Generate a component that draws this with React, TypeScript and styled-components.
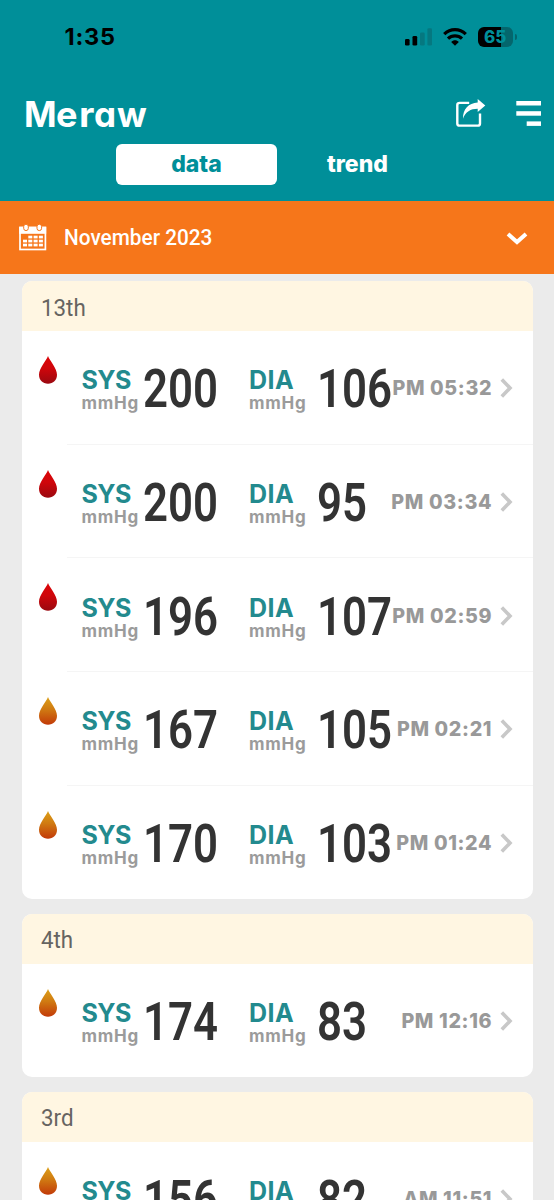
import React from "react";
import styled, { createGlobalStyle } from "styled-components";

const GlobalStyle = createGlobalStyle`
  *, *::before, *::after { box-sizing: border-box; }
  body { margin: 0; background: #ebebeb; font-family: Inter, "Liberation Sans", sans-serif; }
`;

const Screen = styled.div`
  width: 554px;
  height: 1200px;
  overflow: hidden;
  background: #ebebeb;
`;

const Header = styled.header`
  height: 200.5px;
  background: #008f99;
`;

const StatusBar = styled.div`
  display: flex;
  align-items: center;
  justify-content: space-between;
  height: 74px;
  padding: 0 37.5px 0 64.5px;
`;

const Clock = styled.span`
  font-size: 23.5px;
  font-weight: 750;
  line-height: 28px;
  letter-spacing: 0.8px;
  color: #000;
`;

const StatusIcons = styled.div`
  display: flex;
  align-items: center;
  gap: 11px;
`;

const Battery = styled.div`
  display: flex;
  align-items: center;
  justify-content: center;
  width: 35.5px;
  height: 20px;
  border-radius: 6px;
  background: linear-gradient(90deg, #000 0 23px, #04666d 23px);
  font-size: 17px;
  font-weight: 800;
  color: #008f99;
`;

const BatteryGroup = styled.div`
  display: flex;
  align-items: center;
  gap: 2px;
`;

const BatteryTip = styled.div`
  width: 1.5px;
  height: 6px;
  border-radius: 0 2px 2px 0;
  background: #04666d;
`;

const BrandBar = styled.div`
  display: flex;
  align-items: center;
  justify-content: space-between;
  height: 69.5px;
  padding: 10px 13px 0 24px;
`;

const Brand = styled.h1`
  display: flex;
  margin: 0;
  font-size: 35px;
  font-weight: 700;
  line-height: 40px;
  font-feature-settings: "cv11" 1;
  color: #fff;
`;

const BrandPart = styled.span<{ $scale: number; $width: number }>`
  display: block;
  width: ${(p) => p.$width}px;
  transform: scaleX(${(p) => p.$scale});
  transform-origin: left;
`;

const Actions = styled.div`
  display: flex;
  align-items: center;
  gap: 30px;
`;

const Tabs = styled.nav`
  display: flex;
  width: 322px;
  margin: 0 auto;
`;

const Tab = styled.div<{ $active?: boolean }>`
  display: flex;
  align-items: center;
  justify-content: center;
  width: 161px;
  height: 41.5px;
  border-radius: 6px;
  background: ${(p) => (p.$active ? "#fff" : "transparent")};
  color: ${(p) => (p.$active ? "#008f99" : "#fff")};
  font-size: 23px;
  font-weight: 800;
`;

const MonthBar = styled.div`
  display: flex;
  align-items: center;
  height: 73.5px;
  padding: 1px 26px 0 19px;
  background: #f6761a;
`;

const MonthLabel = styled.span`
  flex: 1;
  margin-left: 17px;
  font-family: Roboto, sans-serif;
  font-size: 22.6px;
  font-weight: 500;
  color: #fff;
  transform: scaleX(0.92);
  transform-origin: left;
`;

const List = styled.main`
  display: flex;
  flex-direction: column;
  gap: 14.3px;
  padding: 7px 21.3px 0 21.6px;
`;

const Card = styled.section`
  flex: none;
  overflow: hidden;
  border-radius: 10px;
  background: #fff;
`;

const DayTitle = styled.div`
  display: flex;
  align-items: center;
  height: 50px;
  padding: 2px 0 0 19px;
  background: #fff6e2;
  font-family: Roboto, sans-serif;
  font-size: 24.8px;
  font-weight: 450;
  color: #666461;
`;

const DayText = styled.span`
  transform: scaleX(0.9);
  transform-origin: left;
`;

const Row = styled.div`
  display: flex;
  height: 113.7px;
`;

const DropCell = styled.div`
  width: 45px;
  padding: 25px 0 0 17px;
`;

const RowBody = styled.div<{ $last: boolean }>`
  display: flex;
  align-items: center;
  flex: 1;
  padding: 2px 20px 0 15px;
  border-bottom: 1px solid ${(p) => (p.$last ? "transparent" : "#f5f5f5")};
`;

const Label = styled.div<{ $width: number }>`
  display: flex;
  flex-direction: column;
  width: ${(p) => p.$width}px;
  padding-top: 5px;
`;

const Kind = styled.span<{ $tracking: number }>`
  font-size: 25px;
  font-weight: 750;
  line-height: 26px;
  letter-spacing: ${(p) => p.$tracking}px;
  color: #238a8e;
`;

const Unit = styled.span`
  font-size: 17px;
  font-weight: 700;
  line-height: 21px;
  letter-spacing: 0.7px;
  color: #9b9b9b;
`;

const Reading = styled.span<{ $width: number }>`
  width: ${(p) => p.$width}px;
  font-family: Roboto, sans-serif;
  font-size: 53.5px;
  font-weight: 600;
  line-height: 60px;
  padding-top: 2px;
  color: #333;
`;

const Digits = styled.span`
  display: inline-block;
  transform: scaleX(0.818);
  transform-origin: left;
`;

const Time = styled.span`
  flex: 1;
  font-size: 19.7px;
  font-weight: 800;
  text-align: right;
  white-space: nowrap;
  letter-spacing: 0.65px;
  color: #999;
  margin-right: 7.5px;
`;

type Tone = "red" | "amber";

const Drop = ({ tone }: { tone: Tone }) => (
  <svg width="19" height="28" viewBox="0 0 19 28" style={{ display: "block" }}>
    <defs>
      <linearGradient id={`drop-${tone}`} x1="0" y1="0" x2="0" y2="1">
        <stop offset="0" stopColor={tone === "red" ? "#dc0508" : "#dca018"} />
        <stop offset="0.45" stopColor={tone === "red" ? "#cf060b" : "#d07a12"} />
        <stop offset="1" stopColor={tone === "red" ? "#9a0910" : "#c23a08"} />
      </linearGradient>
    </defs>
    <path
      d="M9 0C7.2 5 0 12 0 18.7C0 24 3.9 27.7 9 27.7S18 24 18 18.7C18 12 10.8 5 9 0Z"
      fill={`url(#drop-${tone})`}
    />
  </svg>
);

const SignalIcon = () => (
  <svg width="27" height="18" viewBox="0 0 27 18">
    <rect x="0" y="11" width="4.6" height="6.5" rx="1.3" fill="#000" />
    <rect x="7.5" y="8" width="4.7" height="9.5" rx="1.3" fill="#000" />
    <rect x="15" y="4.5" width="4.7" height="13" rx="1.3" fill="#057880" />
    <rect x="22.4" y="0.3" width="4.6" height="17.2" rx="1.3" fill="#057880" />
  </svg>
);

const WifiIcon = () => (
  <svg width="24" height="18" viewBox="0 0 24 18" fill="none" stroke="#000" strokeWidth="3.2">
    <path d="M1.2 6.2C7.5 .2 16.5 .2 22.8 6.2" />
    <path d="M5 10.7C9 6.9 15 6.9 19 10.7" />
    <path d="M12 17.7L8.2 14C10.3 11.8 13.7 11.8 15.8 14Z" fill="#000" stroke="none" />
  </svg>
);

const ShareIcon = () => (
  <svg width="30" height="29" viewBox="0 0 30 29">
    <path
      d="M13.2 3.9H3.8Q1.3 3.9 1.3 5.9V24.4Q1.3 26.6 3.5 26.6H21.8Q24 26.6 24 24.4V14.5"
      fill="none"
      stroke="#fff"
      strokeWidth="2.4"
    />
    <path d="M21.7 0L29.3 6.5L21.7 13V9.8C14.5 9.8 9.5 13 7 19.7C6.8 10 12.5 4 21.7 3.5Z" fill="#fff" />
  </svg>
);

const MenuIcon = () => (
  <svg width="25" height="25" viewBox="0 0 25 25" fill="#fff">
    <rect x="0.3" y="0" width="24.7" height="4.5" />
    <rect x="0.3" y="10.2" width="24.7" height="4.5" />
    <rect x="10.7" y="20.4" width="14.3" height="4.5" />
  </svg>
);

const CalendarIcon = () => (
  <svg width="28" height="27" viewBox="0 0 28 27">
    <rect x="1" y="3.5" width="25.4" height="22" fill="none" stroke="#fff" strokeWidth="1.7" />
    <rect x="0.2" y="2.8" width="27" height="7" fill="#fff" />
    {[7, 20.3].map((x) => (
      <rect key={x} x={x - 2.3} y="0.2" width="4.6" height="6.4" rx="2.3" fill="#fff" stroke="#f6761a" strokeWidth="1" />
    ))}
    {[11.7, 15.7, 19.7].flatMap((y, r) =>
      [4, 9.3, 14.6, 19.9]
        .filter((_, c) => r > 0 || c > 0)
        .map((x) => <rect key={`${x}-${y}`} x={x} y={y} width="4" height="2.7" fill="#fff" />)
    )}
  </svg>
);

const ChevronDown = () => (
  <svg width="22" height="14" viewBox="0 0 22 14" fill="none" stroke="#fff" strokeWidth="4">
    <path d="M2 3L11 11L20 3" />
  </svg>
);

const ChevronRight = () => (
  <svg width="13" height="20" viewBox="0 0 13 20" fill="none" stroke="#c8c8c8" strokeWidth="3.6">
    <path d="M1.8 1.5L10 10L1.8 18.5" />
  </svg>
);

type Entry = { tone: Tone; sys: number; dia: number; time: string };

const days: { day: string; entries: Entry[] }[] = [
  {
    day: "13th",
    entries: [
      { tone: "red", sys: 200, dia: 106, time: "PM 05:32" },
      { tone: "red", sys: 200, dia: 95, time: "PM 03:34" },
      { tone: "red", sys: 196, dia: 107, time: "PM 02:59" },
      { tone: "amber", sys: 167, dia: 105, time: "PM 02:21" },
      { tone: "amber", sys: 170, dia: 103, time: "PM 01:24" },
    ],
  },
  { day: "4th", entries: [{ tone: "amber", sys: 174, dia: 83, time: "PM 12:16" }] },
  { day: "3rd", entries: [{ tone: "amber", sys: 156, dia: 82, time: "AM 11:51" }] },
];

export default function App() {
  return (
    <Screen>
      <GlobalStyle />
      <Header>
        <StatusBar>
          <Clock>1:35</Clock>
          <StatusIcons>
            <SignalIcon />
            <WifiIcon />
            <BatteryGroup>
              <Battery>65</Battery>
              <BatteryTip />
            </BatteryGroup>
          </StatusIcons>
        </StatusBar>
        <BrandBar>
          <Brand>
            <BrandPart $width={32} $scale={1}>M</BrandPart>
            <BrandPart $width={22.5} $scale={1.03}>e</BrandPart>
            <BrandPart $width={15.5} $scale={1.08}>r</BrandPart>
            <BrandPart $width={23} $scale={1}>a</BrandPart>
            <BrandPart $width={29} $scale={1}>w</BrandPart>
          </Brand>
          <Actions>
            <ShareIcon />
            <MenuIcon />
          </Actions>
        </BrandBar>
        <Tabs>
          <Tab $active>data</Tab>
          <Tab>trend</Tab>
        </Tabs>
      </Header>
      <MonthBar>
        <CalendarIcon />
        <MonthLabel>November 2023</MonthLabel>
        <ChevronDown />
      </MonthBar>
      <List>
        {days.map(({ day, entries }) => (
          <Card key={day}>
            <DayTitle>
              <DayText>{day}</DayText>
            </DayTitle>
            {entries.map((e, i) => (
              <Row key={e.time}>
                <DropCell>
                  <Drop tone={e.tone} />
                </DropCell>
                <RowBody $last={i === entries.length - 1}>
                  <Label $width={61}>
                    <Kind $tracking={-0.6}>SYS</Kind>
                    <Unit>mmHg</Unit>
                  </Label>
                  <Reading $width={106.5}>
                    <Digits>{e.sys}</Digits>
                  </Reading>
                  <Label $width={68}>
                    <Kind $tracking={0.4}>DIA</Kind>
                    <Unit>mmHg</Unit>
                  </Label>
                  <Reading $width={70}>
                    <Digits>{e.dia}</Digits>
                  </Reading>
                  <Time>{e.time}</Time>
                  <ChevronRight />
                </RowBody>
              </Row>
            ))}
          </Card>
        ))}
      </List>
    </Screen>
  );
}
